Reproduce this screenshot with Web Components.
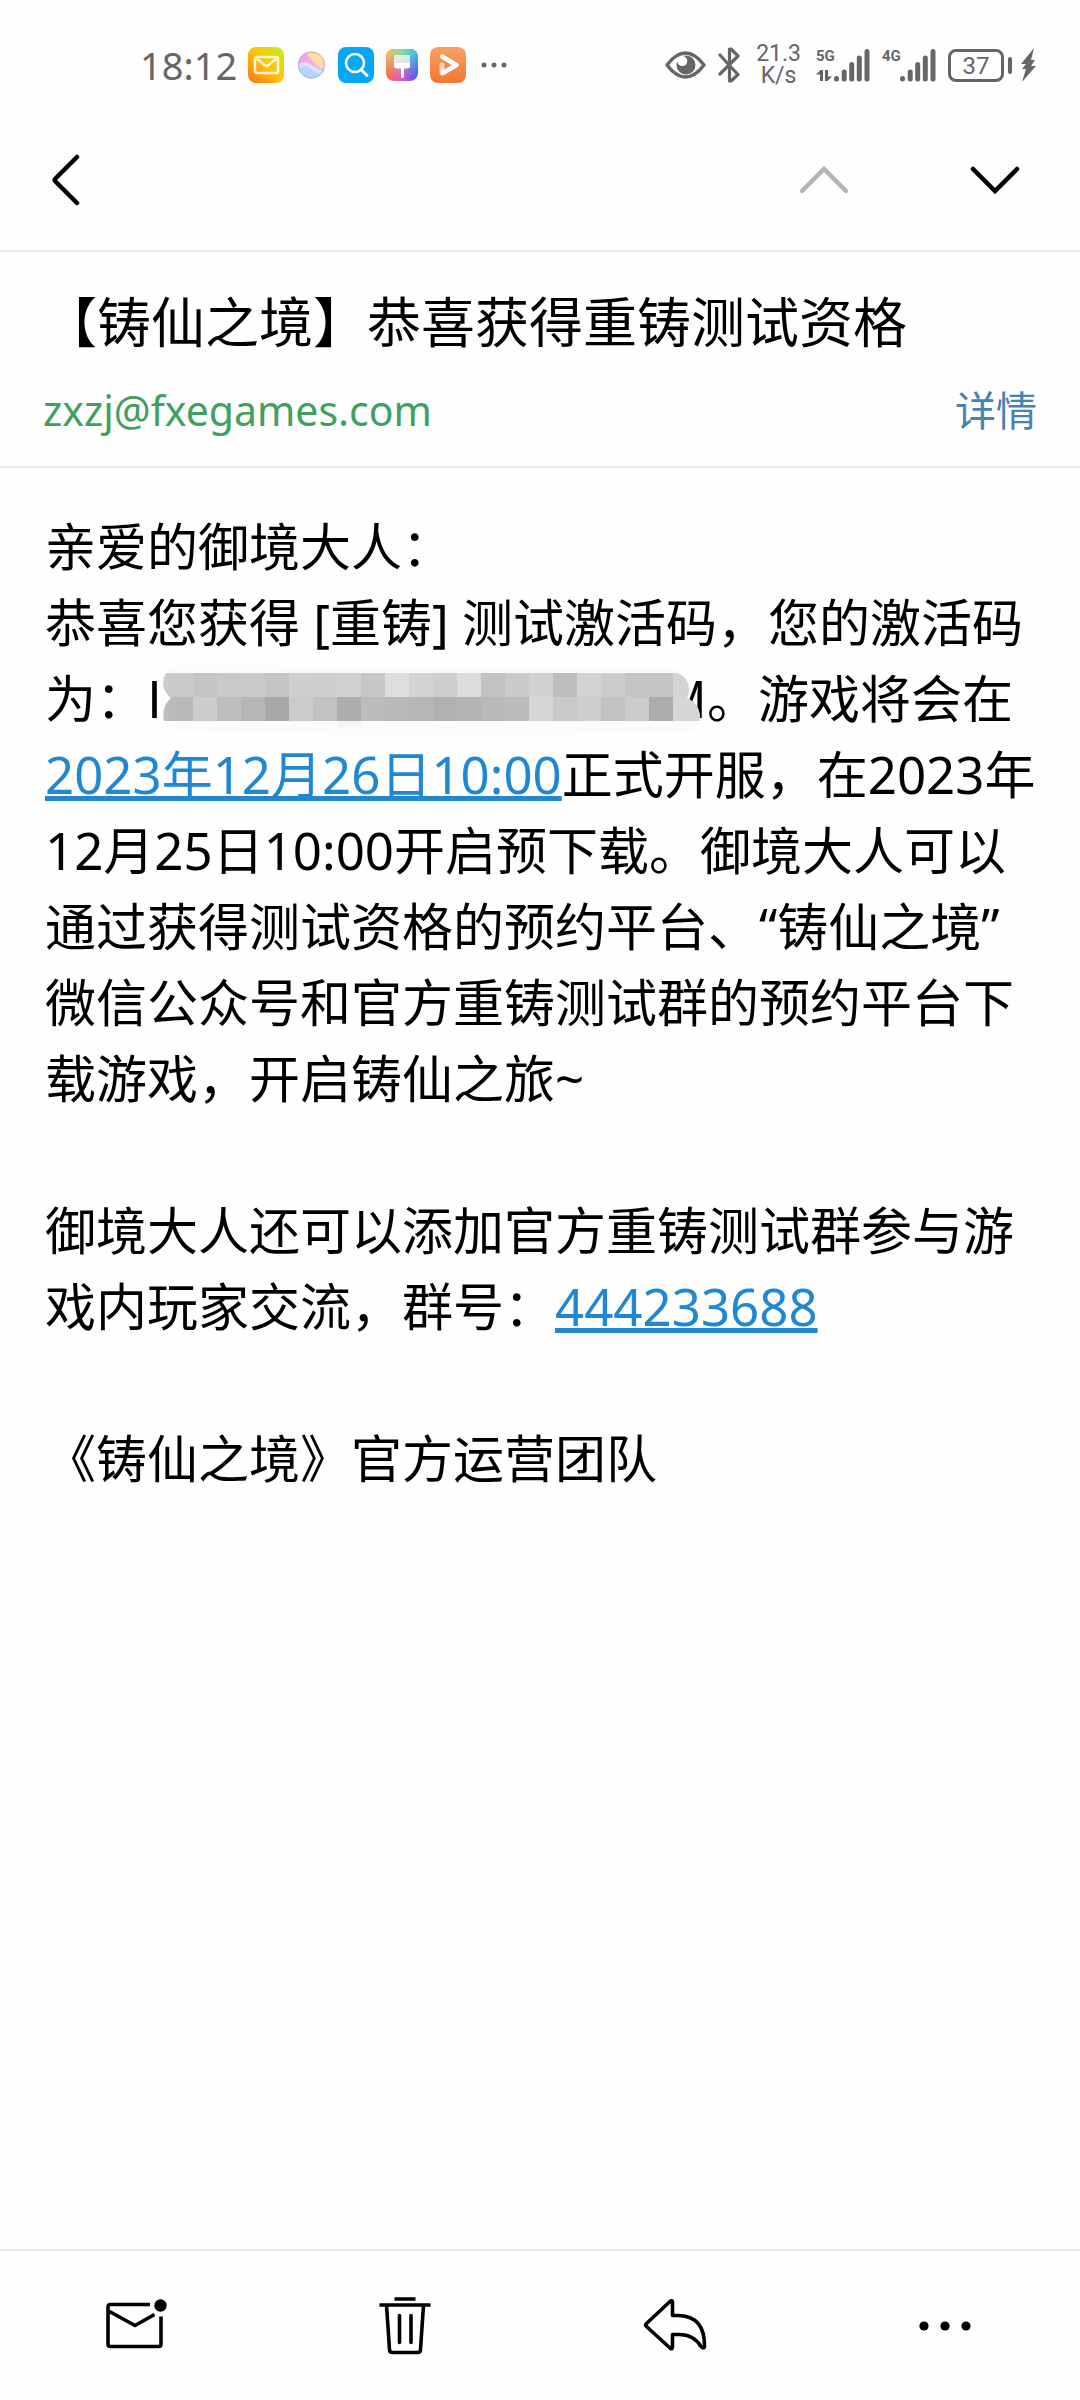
<!DOCTYPE html>
<html lang="zh-CN">
<head>
  <meta charset="UTF-8">
  <meta name="viewport" content="width=device-width, initial-scale=1.0">
  <title>【铸仙之境】恭喜获得重铸测试资格</title>
  <style>
  body {
    --line: #e8e8e8;
    --link: #2088d2;
    margin: 0;
    background: #fefefe;
    color: #000;
    font: 51px/76px "Noto Sans", "Noto Sans CJK SC", sans-serif;
  }

  p {
    margin: 0;
  }

  p a {
    color: var(--link);
    text-decoration: underline 5px;
    text-underline-offset: 2px;
    text-decoration-skip-ink: none;
  }
  </style>
</head>
<body>
  <mail-screen>
    <status-bar slot="top" time="18:12" speed="21.3" battery="37"></status-bar>
    <mail-nav slot="top"></mail-nav>
    <mail-subject slot="top" from="zxzj@fxegames.com">【铸仙之境】恭喜获得重铸测试资格</mail-subject>
    <p>亲爱的御境大人：</p>
    <p>恭喜您获得 [重铸] 测试激活码，您的激活码为：<masked-code first="I" last="M"></masked-code>。游戏将会在<a href="#date">2023年12月26日10:00</a>正式开服，在2023年12月25日10:00开启预下载。御境大人可以通过获得测试资格的预约平台、“铸仙之境”微信公众号和官方重铸测试群的预约平台下载游戏，开启铸仙之旅~</p>
    <br>
    <p>御境大人还可以添加官方重铸测试群参与游戏内玩家交流，群号：<a href="#group">444233688</a></p>
    <br>
    <p>《铸仙之境》官方运营团队</p>
    <mail-toolbar slot="bottom"></mail-toolbar>
  </mail-screen>

  <script>
  const RESET = `
    * { margin: 0; padding: 0; box-sizing: border-box; }
    :host { box-sizing: border-box; }
    svg { display: block; flex: none; }
    button { background: none; border: 0; font: inherit; color: inherit; cursor: pointer; }
  `;

  class BaseElement extends HTMLElement {
    constructor() {
      super();
      this.attachShadow({mode: "open"});
      this.shadowRoot.innerHTML = `<style>${RESET}${this.CSS()}</style>${this.HTML()}`;
    }
  }

  class MailScreen extends BaseElement {
    CSS() {
      return `
        :host { display: flex; flex-direction: column; min-height: 100vh; }
        main { flex: 1; padding: 40px 40px 40px 45px; }
      `;
    }
    HTML() {
      return `
        <slot name="top"></slot>
        <main><slot></slot></main>
        <slot name="bottom"></slot>
      `;
    }
  }

  class StatusBar extends BaseElement {
    CSS() {
      return `
        :host {
          display: flex;
          justify-content: space-between;
          align-items: center;
          height: 110px;
          padding: 20px 42px 0 140px;
          color: #666;
          line-height: 44px;
        }
        .left, .right { display: flex; align-items: center; }
        .left { gap: 11px; }
        .right { gap: 12px; font-family: Roboto, sans-serif; }
        .time { font-size: 38px; }
        .speed { font-size: 23px; line-height: 22px; text-align: center; padding: 0 3px; }
        .signal { display: grid; grid-template-columns: 18px auto; height: 34px; }
        .signal b { font-size: 15px; line-height: 16px; width: 18px; }
        .signal .bars { grid-column: 2; grid-row: 1 / 3; }
        .battery { display: flex; align-items: center; gap: 4px; }
        .level {
          width: 56px;
          height: 33px;
          border: 3px solid;
          border-radius: 8px;
          font-size: 24px;
          line-height: 28px;
          text-align: center;
        }
        .nub { width: 4px; height: 17px; border-radius: 2px; background: currentColor; }
      `;
    }
    bars() {
      return `
        <svg class="bars" width="36" height="34" viewBox="0 0 36 34" stroke="currentColor" stroke-width="5" stroke-linecap="round">
          <path d="M2.5 30.5v.5M10.2 24v7M17.7 16.5v14.5M25.3 10v21M33 3.5v27.5"/>
        </svg>`;
    }
    HTML() {
      return `
        <div class="left">
          <span class="time">${this.getAttribute("time")}</span>
          <svg width="36" height="36" viewBox="0 0 36 36">
            <defs>
              <linearGradient id="m" x1="0" y1="1" x2="1" y2="0">
                <stop offset="0" stop-color="#ff7010"/><stop offset=".5" stop-color="#ffc20c"/><stop offset="1" stop-color="#c4f014"/>
              </linearGradient>
            </defs>
            <rect width="36" height="36" rx="8" fill="url(#m)"/>
            <rect x="7" y="10" width="23" height="16" rx="2" fill="none" stroke="#fff8dc" stroke-width="2.5"/>
            <path d="M9 12l9.500 7.5L28 12" fill="none" stroke="#fff8dc" stroke-width="2.5"/>
          </svg>
          <svg width="32" height="32" viewBox="0 0 32 32">
            <defs><clipPath id="ball"><circle cx="16.5" cy="16" r="13.5"/></clipPath></defs>
            <g clip-path="url(#ball)">
              <rect width="32" height="32" fill="#f5b4dc"/>
              <path d="M12 0h20v21C27 21 17 14 12 4z" fill="#ffdca0"/>
              <path d="M11 3q4 9 11 14l-9-2-10-1 3-10z" fill="#f2aae6"/>
              <path d="M0 20Q7 12 14 16T32 20V32H0z" fill="#b4d8fc"/>
              <path d="M3 18q7-5 12-1t15 9" fill="none" stroke="#e4dcff" stroke-width="4"/>
            </g>
            <circle cx="16.5" cy="16" r="13" fill="none" stroke="#b790dc" stroke-opacity=".6"/>
          </svg>
          <svg width="36" height="36" viewBox="0 0 36 36">
            <rect width="36" height="36" rx="8" fill="#06a7f8"/>
            <circle cx="17" cy="16" r="9" fill="none" stroke="#fff" stroke-width="2.6"/>
            <path d="M23 22.500l6 6" stroke="#fff" stroke-width="3" stroke-linecap="round"/>
          </svg>
          <svg width="34" height="34" viewBox="0 0 34 34">
            <defs>
              <linearGradient id="b1" x1="0" y1="0" x2="1" y2="0">
                <stop offset="0" stop-color="#ff6a3c"/><stop offset=".45" stop-color="#e65ac0"/><stop offset="1" stop-color="#4a58f8"/>
              </linearGradient>
              <linearGradient id="b2" x1="0" y1="0" x2="1" y2="0">
                <stop offset="0" stop-color="#ffb860"/><stop offset=".5" stop-color="#80dca0"/><stop offset="1" stop-color="#38b8f0"/>
              </linearGradient>
              <linearGradient id="fade" x1="0" y1="0" x2="0" y2="1">
                <stop offset=".15" stop-color="#fff"/><stop offset=".85" stop-color="#000"/>
              </linearGradient>
              <mask id="top"><rect width="34" height="34" fill="url(#fade)"/></mask>
            </defs>
            <rect x="1" y="1" width="32" height="32" rx="8" fill="url(#b1)"/>
            <rect x="1" y="1" width="32" height="32" rx="8" fill="url(#b2)" mask="url(#top)"/>
            <rect x="9" y="7" width="16" height="9" fill="#fff" fill-opacity=".7"/>
            <path d="M9 15h16v4q-1 1.500-6 1.500v8a1.500 1.500 0 0 1-3 0v-8q-6 0-7-1.500z" fill="#fff"/>
          </svg>
          <svg width="36" height="36" viewBox="0 0 36 36">
            <defs>
              <linearGradient id="p" x1="0" y1="0" x2="0" y2="1">
                <stop offset="0" stop-color="#f9a066"/><stop offset="1" stop-color="#f07830"/>
              </linearGradient>
            </defs>
            <rect width="36" height="36" rx="8" fill="url(#p)"/>
            <path d="M12 9.500l14.500 8.500L13 26" fill="none" stroke="#fff" stroke-width="4.5" stroke-linecap="round" stroke-linejoin="round"/>
            <path d="M12 18v8" stroke="#fff" stroke-opacity=".65" stroke-width="5" stroke-linecap="round"/>
          </svg>
          <svg width="34" height="8" viewBox="0 0 34 8" fill="currentColor">
            <circle cx="7" cy="4" r="2.5"/><circle cx="17" cy="4" r="2.5"/><circle cx="27" cy="4" r="2.5"/>
          </svg>
        </div>
        <div class="right">
          <svg width="41" height="28" viewBox="0 0 41 28">
            <path d="M2 14Q11 2 20.500 2T39 14Q30 26 20.500 26T2 14z" fill="none" stroke="currentColor" stroke-width="3.4" stroke-linejoin="round"/>
            <path d="M21 4.500a9.500 9.500 0 1 1-9.500 9.500q0-2 .8-3.500a5 5 0 1 0 5.500-5.400q1.500-.6 3.200-.6z" fill="currentColor"/>
          </svg>
          <svg width="23" height="36" viewBox="0 0 23 36" fill="none" stroke="currentColor" stroke-width="3.2" stroke-linejoin="round" stroke-linecap="round">
            <path d="M2 8l9 10 9-9-7-7h-1.500v32H13l7-6.500-9-9.500-9 9"/>
          </svg>
          <div class="speed">${this.getAttribute("speed")}<br>K/s</div>
          <div class="signal">
            <b>5G</b>${this.bars()}
            <svg width="16" height="18" viewBox="0 0 16 18" fill="currentColor"><path d="M0 10.500L4.500 6H7v11H4v-6.500zM9 6h3v6.500h4L11.500 17H9z"/></svg>
          </div>
          <div class="signal"><b>4G</b>${this.bars()}</div>
          <div class="battery">
            <div class="level">${this.getAttribute("battery")}</div>
            <div class="nub"></div>
            <svg width="22" height="36" viewBox="0 0 22 36" fill="currentColor"><path d="M18 1L5 17h5l-4 5h4L6 35l14-16h-5l4-6h-4z"/></svg>
          </div>
        </div>
      `;
    }
  }

  class MailNav extends BaseElement {
    CSS() {
      return `
        :host {
          display: flex;
          align-items: center;
          height: 142px;
          padding: 0 48px 0 38px;
          border-bottom: 2px solid var(--line);
        }
        button { display: grid; place-items: center; width: 75px; height: 96px; }
        .back { width: 56px; margin-right: auto; }
        .next { margin-left: 96px; }
        button:disabled { color: #b3b3b3; }
        svg { fill: none; stroke: currentColor; stroke-width: 4.5; stroke-linecap: round; }
      `;
    }
    HTML() {
      return `
        <button class="back" aria-label="返回"><svg width="30" height="52" viewBox="0 0 30 52"><path d="M26 3L4.500 24.500q-1.500 1.500 0 3L26 49"/></svg></button>
        <button class="prev" aria-label="上一封" disabled><svg width="52" height="30" viewBox="0 0 52 30"><path d="M4 26L26 4l22 22"/></svg></button>
        <button class="next" aria-label="下一封"><svg width="52" height="30" viewBox="0 0 52 30"><path d="M4 4l22 22L48 4"/></svg></button>
      `;
    }
  }

  class MailSubject extends BaseElement {
    CSS() {
      return `
        :host { display: block; padding: 38px 43px 28px; border-bottom: 2px solid var(--line); }
        h1 { font-size: 54px; font-weight: 400; line-height: 64px; margin-bottom: 28px; }
        div { display: flex; justify-content: space-between; font-size: 41px; line-height: 56px; }
        a { color: #40a060; text-decoration: none; }
        button { color: #4682b4; }
      `;
    }
    HTML() {
      const from = this.getAttribute("from");
      return `
        <h1><slot></slot></h1>
        <div><a href="mailto:${from}">${from}</a><button>详情</button></div>
      `;
    }
  }

  // Activation code with only its outer letters showing, the rest is under a mosaic
  class MaskedCode extends BaseElement {
    CSS() {
      return `
        :host {
          display: inline-flex;
          justify-content: space-between;
          position: relative;
          width: 560px;
          font-family: "Noto Sans CJK SC", sans-serif;
          line-height: 60px;
        }
        svg { position: absolute; left: 0; top: -5px; }
      `;
    }
    HTML() {
      const size = 24;
      const rows = [
        "cccac4c9cac5cfced1c7ded3cedcc2cad1bdd3ccc4c4d4d4",
        "bebacdbeb6a8cbc2adbcb9b6b1b4b9bbd6c9cec2cbacd6d6"
      ];
      const cells = rows.map((row, y) => row.match(/../g).map((c, x) =>
        `<rect x="${x * size - 2}" y="${12 + y * size}" width="${size}" height="${size}" fill="#${c}${c}${c}"/>`
      ).join("")).join("");
      return `
        <span>${this.getAttribute("first")}</span><span>${this.getAttribute("last")}</span>
        <svg width="562" height="76" viewBox="0 0 562 76">
          <defs><clipPath id="c"><path d="M19 12H530q12 4 12 18 0 4-2 7 14 6 13 23H17q-3-14 7-23-13-11-5-25z"/></clipPath></defs>
          <path d="M20 8q10-6 40-4l200 2 260-1q22 6 22 25l-2 7q14 8 13 23 0 10-16 12l-250 3-240-4q-28 0-31-15 0-12 8-19-9-8-8-16 0-9 4-13z" fill="#fbfbfb"/>
          <g clip-path="url(#c)">${cells}</g>
          <rect x="190" y="60" width="24" height="6" fill="#f5f5f5"/>
        </svg>
      `;
    }
  }

  class MailToolbar extends BaseElement {
    CSS() {
      return `
        :host { display: grid; grid-template-columns: repeat(4, 1fr); height: 151px; border-top: 2px solid var(--line); }
        button { display: grid; place-items: center; }
        svg { fill: none; stroke: currentColor; stroke-width: 3.6; stroke-linejoin: round; }
        .dot { fill: currentColor; stroke: none; }
      `;
    }
    HTML() {
      return `
        <button aria-label="标为未读">
          <svg width="64" height="64" viewBox="0 0 64 64">
            <path d="M47 10.500H7.500q-2.500 0-2.500 2.500v37q0 2.500 2.500 2.500H55.500q2.500 0 2.500-2.500V22.500M5.500 17L32 31.500 51.500 20.500"/>
            <circle class="dot" cx="57.5" cy="11.5" r="6.2"/>
          </svg>
        </button>
        <button aria-label="删除">
          <svg width="64" height="64" viewBox="0 0 64 64">
            <path d="M21.500 5h21M6.500 11h51M13.500 11l3 44.500q0 3 3 3h25q3 0 3-3l3-44.500"/>
            <path d="M26.500 21.500v27M38 21.500v27" stroke-linecap="round"/>
          </svg>
        </button>
        <button aria-label="回复">
          <svg width="64" height="64" viewBox="0 0 64 64">
            <path d="M29.500 21.500V8.500q0-3-2.500-1L3.500 29.500q-2 1.500 0 3L27 54q2.500 2 2.500-1V40.500h7q14 0 21.500 12 3 3 3.500 0Q62 22.500 36 21.500z"/>
          </svg>
        </button>
        <button aria-label="更多">
          <svg width="64" height="64" viewBox="0 0 64 64">
            <circle class="dot" cx="11" cy="32" r="4.6"/><circle class="dot" cx="32" cy="32" r="4.6"/><circle class="dot" cx="53" cy="32" r="4.6"/>
          </svg>
        </button>
      `;
    }
  }

  customElements.define("mail-screen", MailScreen);
  customElements.define("status-bar", StatusBar);
  customElements.define("mail-nav", MailNav);
  customElements.define("mail-subject", MailSubject);
  customElements.define("masked-code", MaskedCode);
  customElements.define("mail-toolbar", MailToolbar);
  </script>
</body>
</html>
